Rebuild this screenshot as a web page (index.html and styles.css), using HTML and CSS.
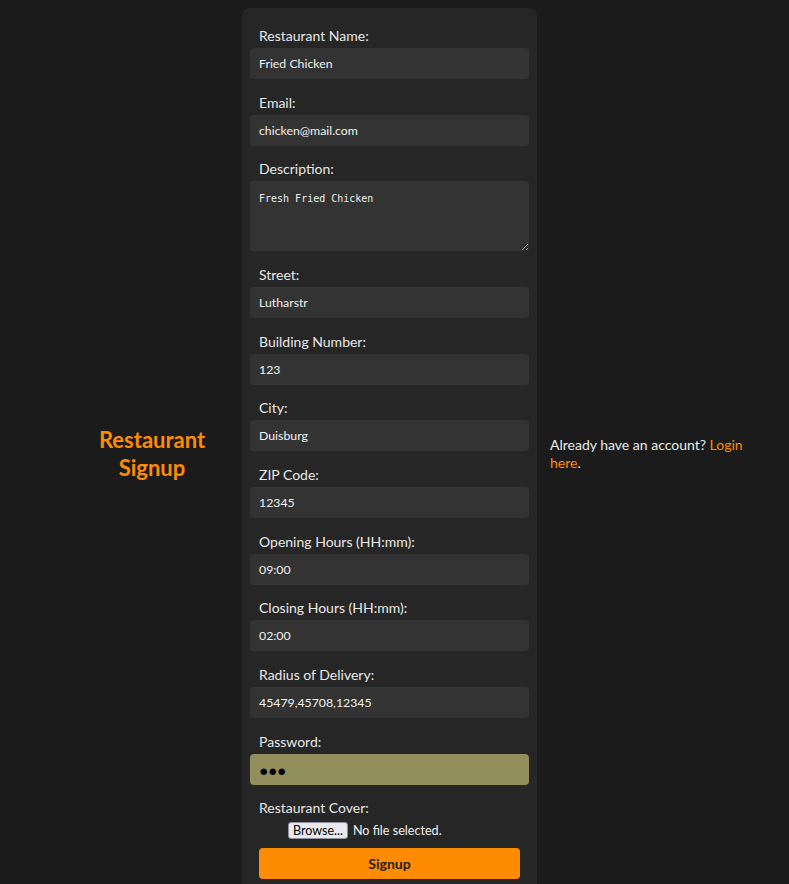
FILE: index.html
```html
<!DOCTYPE html>
<html lang="en">
<head>
<meta charset="utf-8">
<title>Restaurant Signup</title>
<link rel="stylesheet" href="styles.css">
</head>
<body>
<div class="page">
  <div class="side-title">
    <h1 class="title">Restaurant Signup</h1>
  </div>
  <form class="card">
    <div class="field">
      <label class="label">Restaurant Name:</label>
      <input class="input" type="text" value="Fried Chicken">
    </div>
    <div class="field">
      <label class="label">Email:</label>
      <input class="input" type="text" value="chicken@mail.com">
    </div>
    <div class="field">
      <label class="label">Description:</label>
      <textarea class="input textarea">Fresh Fried Chicken</textarea>
    </div>
    <div class="field">
      <label class="label">Street:</label>
      <input class="input" type="text" value="Lutharstr">
    </div>
    <div class="field">
      <label class="label">Building Number:</label>
      <input class="input" type="text" value="123">
    </div>
    <div class="field">
      <label class="label">City:</label>
      <input class="input" type="text" value="Duisburg">
    </div>
    <div class="field">
      <label class="label">ZIP Code:</label>
      <input class="input" type="text" value="12345">
    </div>
    <div class="field">
      <label class="label">Opening Hours (HH:mm):</label>
      <input class="input" type="text" value="09:00">
    </div>
    <div class="field">
      <label class="label">Closing Hours (HH:mm):</label>
      <input class="input" type="text" value="02:00">
    </div>
    <div class="field">
      <label class="label">Radius of Delivery:</label>
      <input class="input" type="text" value="45479,45708,12345">
    </div>
    <div class="field">
      <label class="label">Password:</label>
      <div class="input password"><span class="dots">●●●</span></div>
    </div>
    <div class="field">
      <label class="label">Restaurant Cover:</label>
      <div class="file-row">
        <span class="browse">Browse...</span>
        <span class="file-text">No file selected.</span>
      </div>
      <button class="submit" type="button">Signup</button>
    </div>
  </form>
  <div class="side-login">
    <p class="login-text">Already have an account? <a class="login-link" href="#">Login here</a>.</p>
  </div>
</div>
</body>
</html>
```

FILE: styles.css
```css
* { box-sizing: border-box; }

html, body {
  margin: 0;
  padding: 0;
  background: #1b1b1b;
}

body {
  font-family: Lato, "Open Sans", sans-serif;
  color: #e6e6e6;
  font-size: 14px;
}

.page {
  display: flex;
  align-items: center;
  padding: 8px 0 0 62px;
}

.side-title {
  width: 180px;
  text-align: center;
}

.title {
  margin: 0;
  color: #ff8c00;
  font-size: 22px;
  line-height: 28px;
  font-weight: 700;
  padding: 0 25px;
}

.card {
  width: 295px;
  background: #262626;
  border-radius: 8px;
  padding: 18px 8px 21px;
  display: flex;
  flex-direction: column;
  gap: 13.67px;
}

.field {
  display: flex;
  flex-direction: column;
}

.label {
  display: block;
  padding-left: 9px;
  line-height: 20px;
  margin-bottom: 2px;
  color: #e8e8e8;
}

.input {
  display: block;
  width: 100%;
  height: 31px;
  border: none;
  border-radius: 4px;
  background: #333333;
  color: #f0f0f0;
  font-family: Lato, "Open Sans", sans-serif;
  font-size: 12.3px;
  padding: 0 9px;
  outline: none;
}

.textarea {
  height: 70px;
  padding: 10.5px 9px 9px;
  font-family: "DejaVu Sans Mono", monospace;
  font-size: 10px;
  line-height: 13px;
  resize: vertical;
}

.password {
  background: #938f5c;
  display: flex;
  align-items: center;
  color: #000;
}

.dots {
  font-family: "DejaVu Sans", sans-serif;
  font-size: 8.5px;
  letter-spacing: 1.6px;
  padding-left: 1px;
  padding-top: 3px;
}

.file-row {
  display: flex;
  align-items: center;
  gap: 5px;
  padding-left: 38px;
  height: 20px;
}

.browse {
  display: inline-flex;
  align-items: center;
  height: 17px;
  padding: 0 4px;
  background: #e9e9ed;
  border: 1px solid #8f8f9d;
  border-radius: 3px;
  color: #000;
  font-size: 12.5px;
}

.file-text {
  font-size: 12.6px;
  color: #f0f0f0;
}

.submit {
  margin: 7.67px 9px 0;
  height: 31px;
  background: #ff8c00;
  border: none;
  border-radius: 4px;
  color: #222;
  font-family: Lato, "Open Sans", sans-serif;
  font-weight: 700;
  font-size: 14px;
}

.side-login {
  width: 200px;
  margin-left: 13px;
}

.login-text {
  margin: 0;
  line-height: 18px;
  color: #eaeaea;
}

.login-link {
  color: #ff8c00;
  text-decoration: none;
}
```
